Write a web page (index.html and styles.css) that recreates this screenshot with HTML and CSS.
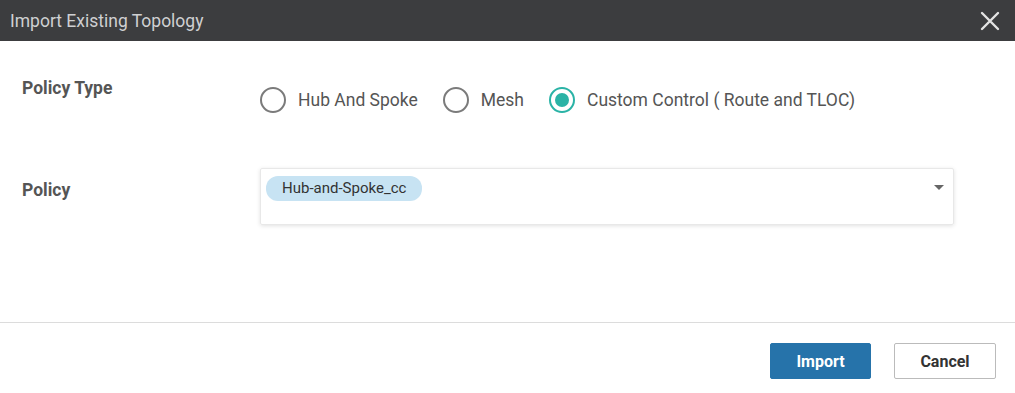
FILE: index.html
```html
<!DOCTYPE html>
<html lang="en">
<head>
<meta charset="UTF-8">
<title>Import Existing Topology</title>
<link rel="stylesheet" href="styles.css">
</head>
<body>

<div class="dialog">
  <div class="header">
    <div class="title">Import Existing Topology</div>
    <svg class="close" width="20" height="20" viewBox="0 0 20 20"><path d="M2 2L18 18M18 2L2 18" stroke="#e4e4e4" stroke-width="2.4" stroke-linecap="round"/></svg>
  </div>

  <div class="body">
    <div class="row row-type">
      <div class="label">Policy Type</div>
      <div class="radios">
        <label class="radio"><span class="dot"></span>Hub And Spoke</label>
        <label class="radio"><span class="dot"></span>Mesh</label>
        <label class="radio checked"><span class="dot"></span>Custom Control ( Route and TLOC)</label>
      </div>
    </div>

    <div class="row row-policy">
      <div class="label">Policy</div>
      <div class="select">
        <span class="chip">Hub-and-Spoke_cc</span>
        <span class="caret"></span>
      </div>
    </div>
  </div>

  <div class="footer">
    <button class="btn primary">Import</button>
    <button class="btn cancel">Cancel</button>
  </div>
</div>

</body>
</html>
```

FILE: styles.css
```css
body{
  margin:0;
  font-family:Roboto,'Liberation Sans',sans-serif;
  background:#fff;
  color:#555;
}

.dialog{
  width:1015px;
  height:393px;
  display:flex;
  flex-direction:column;
}

.header{
  height:41px;
  flex-shrink:0;
  background:#3c3d3f;
  display:flex;
  align-items:center;
  justify-content:space-between;
  padding:0 15px 0 10px;
}

.title{
  font-size:17.5px;
  color:#cfd0d2;
}

.body{
  flex:1;
  padding:0 22px;
}

.row{
  display:flex;
}

.row-type{
  padding-top:37px;
  height:90px;
}

.label{
  width:238px;
  font-size:17.5px;
  font-weight:bold;
  color:#555;
}

.radios{
  display:flex;
  gap:25px;
  margin-top:-2px;
  padding-top:12px;
}

.radio{
  display:flex;
  align-items:center;
  gap:12px;
  font-size:17.5px;
  color:#555;
  height:24px;
}

.dot{
  width:22px;
  height:22px;
  border:2px solid #7b7b7b;
  border-radius:50%;
  display:flex;
  align-items:center;
  justify-content:center;
}

.checked .dot{
  border-color:#2ab3a6;
}

.checked .dot::after{
  content:"";
  width:14px;
  height:14px;
  border-radius:50%;
  background:#2ab3a6;
}

.row-policy .label{
  padding-top:12px;
}

.select{
  width:694px;
  height:57px;
  box-sizing:border-box;
  border:1px solid #e8e8e8;
  border-radius:2px;
  box-shadow:0 1px 4px rgba(0,0,0,0.12);
  padding:7px 5px;
  position:relative;
}

.chip{
  display:inline-block;
  background:#c7e3f3;
  border-radius:12px;
  padding:3px 16px 4px;
  font-size:15px;
  color:#333;
}

.caret{
  position:absolute;
  right:9px;
  top:16px;
  border-left:5px solid transparent;
  border-right:5px solid transparent;
  border-top:5px solid #666;
}

.footer{
  height:71px;
  box-sizing:border-box;
  flex-shrink:0;
  border-top:1px solid #dcdcdc;
  display:flex;
  justify-content:flex-end;
  align-items:flex-start;
  gap:23px;
  padding:20px 19px 0 0;
}

.btn{
  width:101px;
  height:36px;
  border:1px solid #bbb;
  border-radius:2px;
  background:#fff;
  color:#333;
  font-family:Roboto,'Liberation Sans',sans-serif;
  font-weight:bold;
  font-size:16px;
}

.btn.primary{
  background:#2673aa;
  border-color:#2673aa;
  color:#fff;
}

.btn.cancel{
  width:102px;
}
```
